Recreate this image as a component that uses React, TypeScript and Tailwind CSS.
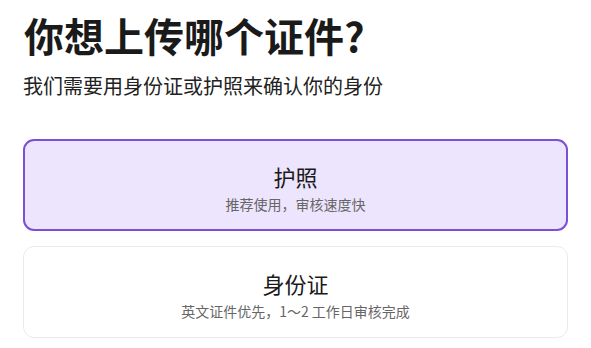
import { useState } from 'react';

const OPTIONS = [
  { key: 'passport', title: '护照', desc: '推荐使用，审核速度快' },
  { key: 'idcard', title: '身份证', desc: '英文证件优先，1～2 工作日审核完成' },
];

export default function App() {
  const [selected, setSelected] = useState('passport');

  return (
    <div
      className="w-[591px] h-[348px] overflow-hidden bg-white px-[23px] pt-[11px]"
      style={{ fontFamily: '"Noto Sans CJK SC", "Noto Sans", sans-serif' }}
    >
      <h1 className="text-[40px] leading-[48px] font-bold text-[#1a1a1a] pl-px">你想上传哪个证件?</h1>
      <p className="mt-[13px] text-[20px] leading-[28px] text-[#222]">我们需要用身份证或护照来确认你的身份</p>

      {/* Options */}
      <div className="mt-[39px] flex flex-col gap-[15px]">
        {OPTIONS.map((opt) => {
          const active = selected === opt.key;
          return (
            <button
              key={opt.key}
              onClick={() => setSelected(opt.key)}
              className={`h-[92px] w-full rounded-[11px] flex flex-col items-center justify-center pt-[5px] ${
                active ? 'bg-[#ede5fd] border-2 border-[#7b4fd6]' : 'bg-white border border-[#ebebeb]'
              }`}
            >
              <span className="text-[22px] leading-[30px] text-[#1a1a1a]">{opt.title}</span>
              <span className="mt-[3px] text-[14px] leading-[20px] text-[#666]">{opt.desc}</span>
            </button>
          );
        })}
      </div>
    </div>
  );
}
